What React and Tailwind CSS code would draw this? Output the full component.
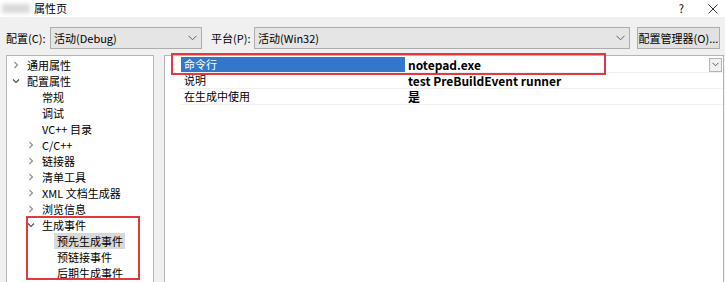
import React from 'react'

const font = { fontFamily: '"Noto Sans CJK SC", "Noto Sans", sans-serif' }

function Chev({ open }) {
  return (
    <svg width="8" height="8" viewBox="0 0 8 8">
      {open
        ? <path d="M1 2.5 L4 5.5 L7 2.5" fill="none" stroke="#4d4d4d" strokeWidth="1.1" />
        : <path d="M2.5 1 L5.5 4 L2.5 7" fill="none" stroke="#8a8a8a" strokeWidth="1.1" />}
    </svg>
  )
}

function ComboArrow() {
  return (
    <svg width="9" height="6" viewBox="0 0 9 6">
      <path d="M0.5 0.8 L4.5 4.8 L8.5 0.8" fill="none" stroke="#606060" strokeWidth="1" />
    </svg>
  )
}

const tree = [
  { t: '通用属性', lvl: 0, chev: 'closed' },
  { t: '配置属性', lvl: 0, chev: 'open' },
  { t: '常规', lvl: 1 },
  { t: '调试', lvl: 1 },
  { t: 'VC++ 目录', lvl: 1 },
  { t: 'C/C++', lvl: 1, chev: 'closed' },
  { t: '链接器', lvl: 1, chev: 'closed' },
  { t: '清单工具', lvl: 1, chev: 'closed' },
  { t: 'XML 文档生成器', lvl: 1, chev: 'closed' },
  { t: '浏览信息', lvl: 1, chev: 'closed' },
]

const events = [
  { t: '生成事件', lvl: 1, chev: 'open' },
  { t: '预先生成事件', lvl: 2, sel: true },
  { t: '预链接事件', lvl: 2 },
  { t: '后期生成事件', lvl: 2 },
]

function TreeRow({ item }) {
  const pad = item.lvl === 0 ? 'pl-[1px]' : item.lvl === 1 ? 'pl-[16px]' : 'pl-[31px]'
  return (
    <div className={`h-[16px] flex items-center whitespace-nowrap ${pad}`}>
      <span className="w-[16px] shrink-0 flex items-center justify-center">
        {item.chev && <Chev open={item.chev === 'open'} />}
      </span>
      <span className={`pl-[3px] pr-[2px] leading-[16px] ${item.sel ? 'bg-[#d9d9d9]' : ''}`}>{item.t}</span>
    </div>
  )
}

const props = [
  { n: '命令行', v: 'notepad.exe', sel: true },
  { n: '说明', v: 'test PreBuildEvent runner' },
  { n: '在生成中使用', v: '是' },
]

export default function App() {
  return (
    <div className="w-[725px] h-[282px] bg-[#f0f0f0] overflow-hidden text-[11px] text-black" style={font}>
      <div className="h-[17px] bg-white flex items-center">
        <span className="ml-[2px] w-[28px] h-[9px] bg-[#d8d8d8] blur-[2px]" />
        <span className="ml-[4px]">属性页</span>
        <span className="ml-auto mr-[24px]">?</span>
        <svg width="10" height="10" viewBox="0 0 10 10" className="mr-[7px]">
          <path d="M0.5 0.5 L9.5 9.5 M9.5 0.5 L0.5 9.5" stroke="#333" strokeWidth="1" />
        </svg>
      </div>

      <div className="flex items-center mt-[10px] h-[22px] pl-[6px] pr-[5px] whitespace-nowrap">
        <span className="w-[44px] shrink-0">配置(C):</span>
        <div className="w-[152px] shrink-0 h-[22px] border border-[#adadad] bg-[#e5e5e5] flex items-center pl-[3px] pr-[4px]">
          <span className="flex-1">活动(Debug)</span>
          <ComboArrow />
        </div>
        <span className="ml-[9px] w-[43px] shrink-0">平台(P):</span>
        <div className="w-[376px] shrink-0 h-[22px] border border-[#adadad] bg-[#e5e5e5] flex items-center pl-[3px] pr-[4px]">
          <span className="flex-1">活动(Win32)</span>
          <ComboArrow />
        </div>
        <div className="ml-[7px] flex-1 h-[22px] border border-[#adadad] bg-[#e1e1e1] flex items-center justify-center">
          配置管理器(O)...
        </div>
      </div>

      <div className="flex mt-[6px] pl-[6px] pr-[1px] h-[240px]">
        <div className="w-[148px] shrink-0 h-full bg-white border border-[#b5b5b5] pt-[1px]">
          {tree.map(it => <TreeRow key={it.t} item={it} />)}
          <div className="relative">
            {events.map(it => <TreeRow key={it.t} item={it} />)}
            <div className="absolute left-[19px] top-[-1px] w-[114px] h-[64px] border-2 border-[#e0393e]" />
          </div>
        </div>

        <div className="ml-[10px] flex-1 h-full bg-white border border-[#b5b5b5] relative pt-[1px]">
          {props.map(p => (
            <div key={p.n} className="flex h-[16px]">
              <span className="w-[16px]" />
              <div className={`w-[224px] flex items-center pl-[3px] border-b border-[#f0f0f0] ${p.sel ? 'bg-[#3277c9] text-white' : ''}`}>
                {p.n}
              </div>
              <div className="flex-1 flex items-center pl-[3px] text-[12px] font-bold border-b border-[#f0f0f0]">
                <span className="flex-1">{p.v}</span>
                {p.sel && (
                  <span className="w-[13px] h-[14px] mr-[1px] border border-[#b5b5b5] bg-[#f0f0f0] flex items-center justify-center">
                    <svg width="7" height="5" viewBox="0 0 7 5">
                      <path d="M0.5 0.8 L3.5 3.8 L6.5 0.8" fill="none" stroke="#606060" strokeWidth="1" />
                    </svg>
                  </span>
                )}
              </div>
            </div>
          ))}
          <div className="absolute left-[6px] top-[-3px] w-[435px] h-[22px] border-2 border-[#e0393e]" />
        </div>
      </div>
    </div>
  )
}
